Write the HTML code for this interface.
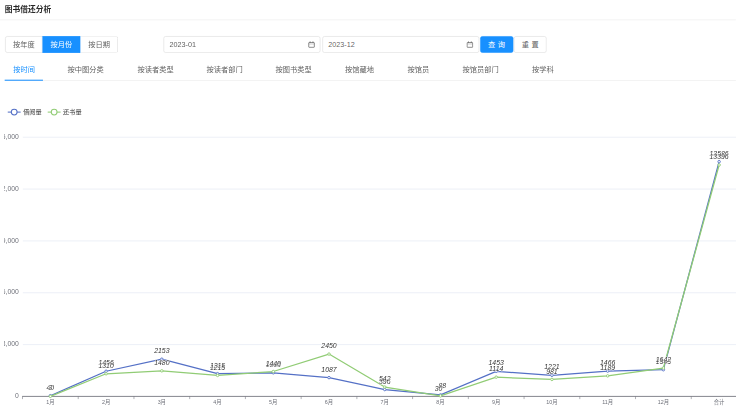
<!DOCTYPE html>
<html lang="zh-CN">
<head>
<meta charset="utf-8">
<title>图书借还分析</title>
<style>
html,body{margin:0;padding:0;background:#fff;}
body{width:736px;height:408px;overflow:hidden;position:relative;font-family:"Liberation Sans","Noto Sans CJK SC",sans-serif;}
#wrap{position:absolute;left:0;top:0;width:1422.22px;height:788.41px;transform:scale(0.5175);transform-origin:0 0;color:rgba(0,0,0,.65);font-size:14px;}
#wrap *{box-sizing:border-box;}
.title{position:absolute;left:9px;top:7.5px;height:22px;line-height:22px;font-size:15px;font-weight:bold;color:rgba(0,0,0,.85);white-space:nowrap;}
.hline{position:absolute;left:0;top:38.4px;width:100%;height:1px;background:#e8e8e8;}
.rg{position:absolute;top:70px;height:32px;line-height:30px;text-align:center;border:1px solid #d9d9d9;border-left:0;background:#fff;white-space:nowrap;}
.rg.first{border-left:1px solid #d9d9d9;border-radius:4px 0 0 4px;}
.rg.last{border-radius:0 4px 4px 0;}
.rg.on{background:#1890ff;border-color:#1890ff;color:#fff;}
.inp{position:absolute;top:70px;height:32px;border:1px solid #d9d9d9;border-radius:4px;background:#fff;line-height:31px;padding-left:10.5px;white-space:nowrap;}
.cal{position:absolute;top:79px;}
.btn{position:absolute;top:70px;height:32px;line-height:31px;border:1px solid #d9d9d9;border-radius:4px;text-align:center;background:#fff;white-space:nowrap;}
.btn.pri{background:#1890ff;border-color:#1890ff;color:#fff;}
.btn span{letter-spacing:5px;margin-right:-5px;}
.tab{position:absolute;top:124.3px;height:22px;line-height:22px;white-space:nowrap;}
.tab.act{color:#1890ff;}
.tline{position:absolute;left:10px;right:0;top:155px;height:1px;background:#e8e8e8;}
.ink{position:absolute;left:9px;width:74px;top:154px;height:2px;background:#1890ff;}
.chart{position:absolute;left:0;top:0;}
.chart text{font-family:"Liberation Sans","Noto Sans CJK SC",sans-serif;}
.ax{font-size:5.4px;fill:#6E7079;}
.ay{font-size:6.8px;fill:#6E7079;}
.lg{font-size:6.21px;fill:#333;}
.lb{font-size:6.9px;fill:#333;font-style:italic;stroke:#fff;stroke-width:0.7px;paint-order:stroke;stroke-linejoin:round;}
</style>
</head>
<body>
<div id="wrap">
<div class="title">图书借还分析</div>
<div class="hline"></div>
<div class="rg first" style="left:9.7px;width:72.7px">按年度</div>
<div class="rg on" style="left:82.3px;width:73.2px">按月份</div>
<div class="rg last" style="left:155.6px;width:72.7px">按日期</div>
<div class="inp" style="left:315.9px;width:303.6px">2023-01</div>
<svg class="cal" style="left:594.7px" width="14" height="14" viewBox="0 0 14 14"><rect x="1.6" y="3.2" width="10.8" height="9.2" rx="0.8" fill="none" stroke="#555" stroke-width="1.3"/><line x1="1.6" y1="6" x2="12.4" y2="6" stroke="#888" stroke-width="0.8"/><line x1="4.3" y1="1" x2="4.3" y2="3.6" stroke="#555" stroke-width="1.3"/><line x1="9.7" y1="1" x2="9.7" y2="3.6" stroke="#555" stroke-width="1.3"/></svg>
<div class="inp" style="left:622.7px;width:302.9px">2023-12</div>
<svg class="cal" style="left:900.5px" width="14" height="14" viewBox="0 0 14 14"><rect x="1.6" y="3.2" width="10.8" height="9.2" rx="0.8" fill="none" stroke="#555" stroke-width="1.3"/><line x1="1.6" y1="6" x2="12.4" y2="6" stroke="#888" stroke-width="0.8"/><line x1="4.3" y1="1" x2="4.3" y2="3.6" stroke="#555" stroke-width="1.3"/><line x1="9.7" y1="1" x2="9.7" y2="3.6" stroke="#555" stroke-width="1.3"/></svg>
<div class="btn pri" style="left:927.5px;width:64.0px"><span>查询</span></div>
<div class="btn" style="left:993.2px;width:63.0px"><span>重置</span></div>
<div class="tab act" style="left:25.7px">按时间</div>
<div class="tab" style="left:130.4px">按中图分类</div>
<div class="tab" style="left:265.7px">按读者类型</div>
<div class="tab" style="left:399.0px">按读者部门</div>
<div class="tab" style="left:532.4px">按图书类型</div>
<div class="tab" style="left:666.7px">按馆藏地</div>
<div class="tab" style="left:787.4px">按馆员</div>
<div class="tab" style="left:893.7px">按馆员部门</div>
<div class="tab" style="left:1028.0px">按学科</div>

<div class="tline"></div>
<div class="ink"></div>
<svg class="chart" width="1422.22" height="788.41" viewBox="0 0 736 408">
<defs><clipPath id="cl"><rect x="4.9" y="90" width="740" height="330"/></clipPath></defs>
<g clip-path="url(#cl)">
<line x1="22.9" y1="344.57" x2="737" y2="344.57" stroke="#E0E6F1" stroke-width="0.6"/>
<line x1="22.9" y1="292.74" x2="737" y2="292.74" stroke="#E0E6F1" stroke-width="0.6"/>
<line x1="22.9" y1="240.91" x2="737" y2="240.91" stroke="#E0E6F1" stroke-width="0.6"/>
<line x1="22.9" y1="189.08" x2="737" y2="189.08" stroke="#E0E6F1" stroke-width="0.6"/>
<line x1="22.9" y1="137.25" x2="737" y2="137.25" stroke="#E0E6F1" stroke-width="0.6"/>
<line x1="22.2" y1="396.4" x2="737" y2="396.4" stroke="#6E7079" stroke-width="0.85"/>
<line x1="22.50" y1="396.4" x2="22.50" y2="399.10" stroke="#6E7079" stroke-width="0.55"/>
<line x1="78.23" y1="396.4" x2="78.23" y2="399.10" stroke="#6E7079" stroke-width="0.55"/>
<line x1="133.96" y1="396.4" x2="133.96" y2="399.10" stroke="#6E7079" stroke-width="0.55"/>
<line x1="189.69" y1="396.4" x2="189.69" y2="399.10" stroke="#6E7079" stroke-width="0.55"/>
<line x1="245.42" y1="396.4" x2="245.42" y2="399.10" stroke="#6E7079" stroke-width="0.55"/>
<line x1="301.15" y1="396.4" x2="301.15" y2="399.10" stroke="#6E7079" stroke-width="0.55"/>
<line x1="356.88" y1="396.4" x2="356.88" y2="399.10" stroke="#6E7079" stroke-width="0.55"/>
<line x1="412.61" y1="396.4" x2="412.61" y2="399.10" stroke="#6E7079" stroke-width="0.55"/>
<line x1="468.34" y1="396.4" x2="468.34" y2="399.10" stroke="#6E7079" stroke-width="0.55"/>
<line x1="524.07" y1="396.4" x2="524.07" y2="399.10" stroke="#6E7079" stroke-width="0.55"/>
<line x1="579.80" y1="396.4" x2="579.80" y2="399.10" stroke="#6E7079" stroke-width="0.55"/>
<line x1="635.53" y1="396.4" x2="635.53" y2="399.10" stroke="#6E7079" stroke-width="0.55"/>
<line x1="691.26" y1="396.4" x2="691.26" y2="399.10" stroke="#6E7079" stroke-width="0.55"/>
<line x1="746.99" y1="396.4" x2="746.99" y2="399.10" stroke="#6E7079" stroke-width="0.55"/>
<text x="18.8" y="398.10" text-anchor="end" class="ay">0</text>
<text x="18.8" y="346.27" text-anchor="end" class="ay">3,000</text>
<text x="18.8" y="294.44" text-anchor="end" class="ay">6,000</text>
<text x="18.8" y="242.61" text-anchor="end" class="ay">9,000</text>
<text x="18.8" y="190.78" text-anchor="end" class="ay">12,000</text>
<text x="18.8" y="138.95" text-anchor="end" class="ay">15,000</text>
<text x="50.36" y="404.1" text-anchor="middle" class="ax">1月</text>
<text x="106.09" y="404.1" text-anchor="middle" class="ax">2月</text>
<text x="161.82" y="404.1" text-anchor="middle" class="ax">3月</text>
<text x="217.55" y="404.1" text-anchor="middle" class="ax">4月</text>
<text x="273.28" y="404.1" text-anchor="middle" class="ax">5月</text>
<text x="329.01" y="404.1" text-anchor="middle" class="ax">6月</text>
<text x="384.75" y="404.1" text-anchor="middle" class="ax">7月</text>
<text x="440.47" y="404.1" text-anchor="middle" class="ax">8月</text>
<text x="496.20" y="404.1" text-anchor="middle" class="ax">9月</text>
<text x="551.93" y="404.1" text-anchor="middle" class="ax">10月</text>
<text x="607.66" y="404.1" text-anchor="middle" class="ax">11月</text>
<text x="663.39" y="404.1" text-anchor="middle" class="ax">12月</text>
<text x="719.12" y="404.1" text-anchor="middle" class="ax">合计</text>
<polyline points="50.36,395.71 106.09,371.25 161.82,359.20 217.55,373.68 273.28,372.80 329.01,377.62 384.75,389.56 440.47,394.88 496.20,371.30 551.93,375.31 607.66,371.07 663.39,369.71 719.12,161.68" fill="none" stroke="#5470c6" stroke-width="1.25" stroke-linejoin="bevel"/>
<circle cx="50.36" cy="395.71" r="1.25" fill="#fff" stroke="#5470c6" stroke-width="0.9"/>
<circle cx="106.09" cy="371.25" r="1.25" fill="#fff" stroke="#5470c6" stroke-width="0.9"/>
<circle cx="161.82" cy="359.20" r="1.25" fill="#fff" stroke="#5470c6" stroke-width="0.9"/>
<circle cx="217.55" cy="373.68" r="1.25" fill="#fff" stroke="#5470c6" stroke-width="0.9"/>
<circle cx="273.28" cy="372.80" r="1.25" fill="#fff" stroke="#5470c6" stroke-width="0.9"/>
<circle cx="329.01" cy="377.62" r="1.25" fill="#fff" stroke="#5470c6" stroke-width="0.9"/>
<circle cx="384.75" cy="389.56" r="1.25" fill="#fff" stroke="#5470c6" stroke-width="0.9"/>
<circle cx="440.47" cy="394.88" r="1.25" fill="#fff" stroke="#5470c6" stroke-width="0.9"/>
<circle cx="496.20" cy="371.30" r="1.25" fill="#fff" stroke="#5470c6" stroke-width="0.9"/>
<circle cx="551.93" cy="375.31" r="1.25" fill="#fff" stroke="#5470c6" stroke-width="0.9"/>
<circle cx="607.66" cy="371.07" r="1.25" fill="#fff" stroke="#5470c6" stroke-width="0.9"/>
<circle cx="663.39" cy="369.71" r="1.25" fill="#fff" stroke="#5470c6" stroke-width="0.9"/>
<circle cx="719.12" cy="161.68" r="1.25" fill="#fff" stroke="#5470c6" stroke-width="0.9"/>
<polyline points="50.36,396.35 106.09,373.77 161.82,370.83 217.55,375.41 273.28,371.52 329.01,354.07 384.75,387.04 440.47,395.88 496.20,377.15 551.93,379.45 607.66,375.86 663.39,368.03 719.12,164.96" fill="none" stroke="#91cc75" stroke-width="1.25" stroke-linejoin="bevel"/>
<circle cx="50.36" cy="396.35" r="1.25" fill="#fff" stroke="#91cc75" stroke-width="0.9"/>
<circle cx="106.09" cy="373.77" r="1.25" fill="#fff" stroke="#91cc75" stroke-width="0.9"/>
<circle cx="161.82" cy="370.83" r="1.25" fill="#fff" stroke="#91cc75" stroke-width="0.9"/>
<circle cx="217.55" cy="375.41" r="1.25" fill="#fff" stroke="#91cc75" stroke-width="0.9"/>
<circle cx="273.28" cy="371.52" r="1.25" fill="#fff" stroke="#91cc75" stroke-width="0.9"/>
<circle cx="329.01" cy="354.07" r="1.25" fill="#fff" stroke="#91cc75" stroke-width="0.9"/>
<circle cx="384.75" cy="387.04" r="1.25" fill="#fff" stroke="#91cc75" stroke-width="0.9"/>
<circle cx="440.47" cy="395.88" r="1.25" fill="#fff" stroke="#91cc75" stroke-width="0.9"/>
<circle cx="496.20" cy="377.15" r="1.25" fill="#fff" stroke="#91cc75" stroke-width="0.9"/>
<circle cx="551.93" cy="379.45" r="1.25" fill="#fff" stroke="#91cc75" stroke-width="0.9"/>
<circle cx="607.66" cy="375.86" r="1.25" fill="#fff" stroke="#91cc75" stroke-width="0.9"/>
<circle cx="663.39" cy="368.03" r="1.25" fill="#fff" stroke="#91cc75" stroke-width="0.9"/>
<circle cx="719.12" cy="164.96" r="1.25" fill="#fff" stroke="#91cc75" stroke-width="0.9"/>
<text x="50.36" y="389.81" text-anchor="middle" class="lb">40</text>
<text x="106.09" y="365.35" text-anchor="middle" class="lb">1456</text>
<text x="161.82" y="353.30" text-anchor="middle" class="lb">2153</text>
<text x="217.55" y="367.78" text-anchor="middle" class="lb">1315</text>
<text x="273.28" y="366.90" text-anchor="middle" class="lb">1366</text>
<text x="329.01" y="371.72" text-anchor="middle" class="lb">1087</text>
<text x="384.75" y="383.66" text-anchor="middle" class="lb">396</text>
<text x="442.37" y="388.38" text-anchor="middle" class="lb">88</text>
<text x="496.20" y="365.40" text-anchor="middle" class="lb">1453</text>
<text x="551.93" y="369.41" text-anchor="middle" class="lb">1221</text>
<text x="607.66" y="365.17" text-anchor="middle" class="lb">1466</text>
<text x="663.39" y="363.81" text-anchor="middle" class="lb">1545</text>
<text x="719.12" y="155.78" text-anchor="middle" class="lb">13586</text>
<text x="50.36" y="390.45" text-anchor="middle" class="lb">3</text>
<text x="106.09" y="367.87" text-anchor="middle" class="lb">1310</text>
<text x="161.82" y="364.93" text-anchor="middle" class="lb">1480</text>
<text x="217.55" y="369.51" text-anchor="middle" class="lb">1215</text>
<text x="273.28" y="365.62" text-anchor="middle" class="lb">1440</text>
<text x="329.01" y="348.17" text-anchor="middle" class="lb">2450</text>
<text x="384.75" y="381.14" text-anchor="middle" class="lb">542</text>
<text x="438.57" y="390.88" text-anchor="middle" class="lb">30</text>
<text x="496.20" y="371.25" text-anchor="middle" class="lb">1114</text>
<text x="551.93" y="373.55" text-anchor="middle" class="lb">981</text>
<text x="607.66" y="369.96" text-anchor="middle" class="lb">1189</text>
<text x="663.39" y="362.13" text-anchor="middle" class="lb">1642</text>
<text x="719.12" y="159.06" text-anchor="middle" class="lb">13396</text>
</g>
<line x1="7.75" y1="112.1" x2="20.65" y2="112.1" stroke="#5470c6" stroke-width="1.04"/>
<circle cx="14.2" cy="112.1" r="2.9" fill="#fff" stroke="#5470c6" stroke-width="1.04"/>
<text x="23.15" y="114.35" class="lg">借阅量</text>
<line x1="47.7" y1="112.1" x2="60.6" y2="112.1" stroke="#91cc75" stroke-width="1.04"/>
<circle cx="54.150000000000006" cy="112.1" r="2.9" fill="#fff" stroke="#91cc75" stroke-width="1.04"/>
<text x="63.1" y="114.35" class="lg">还书量</text>
</svg>
</div>
</body>
</html>
